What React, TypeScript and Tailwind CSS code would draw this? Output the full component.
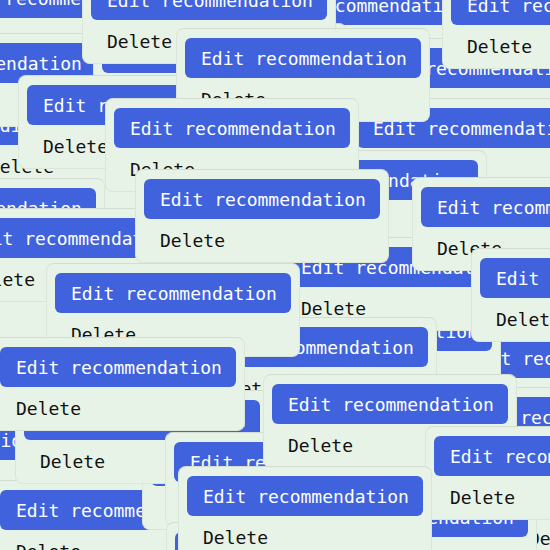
import React from 'react';

// Button top-left corners, in stacking order (first = bottom-most).
const cards: { x: number; y: number }[] = [
  { x: -65, y: -22 },
  { x: 243, y: -15 },
  { x: 355, y: 48 },
  { x: 451, y: -15 },
  { x: -27, y: 105 },
  { x: -140, y: 43 },
  { x: 102, y: 33 },
  { x: 91, y: -20 },
  { x: 27, y: 85 },
  { x: 357, y: 108 },
  { x: 185, y: 38 },
  { x: -140, y: 188 },
  { x: 242, y: 160 },
  { x: 114, y: 108 },
  { x: -46, y: 218 },
  { x: 452, y: 338 },
  { x: 256, y: 311 },
  { x: 285, y: 247 },
  { x: 144, y: 179 },
  { x: 421, y: 187 },
  { x: 480, y: 258 },
  { x: 192, y: 327 },
  { x: 55, y: 273 },
  { x: 450, y: 397 },
  { x: -189, y: 420 },
  { x: 0, y: 490 },
  { x: 151, y: 446 },
  { x: 24, y: 400 },
  { x: 0, y: 347 },
  { x: 174, y: 442 },
  { x: 272, y: 384 },
  { x: 513, y: 477 },
  { x: 292, y: 497 },
  { x: 175, y: 532 },
  { x: 434, y: 436 },
  { x: 187, y: 476 },
];

const RecommendationMenu: React.FC<{ x: number; y: number }> = ({ x, y }) => (
  <div
    className="absolute w-[254px] rounded-lg border border-[#dce5da] border-t-[#d3dcd1] bg-[#e8f3e7] px-2 pt-[9px] pb-[8px]"
    style={{ left: x - 9, top: y - 10 }}
  >
    <button className="flex h-10 w-full items-center whitespace-nowrap rounded-md bg-[#4063dd] px-4 text-left text-[18px] text-white">
      Edit recommendation
    </button>
    <div className="mt-[7px] flex h-7 items-center whitespace-nowrap px-4 text-[18px] text-[#111111]">
      Delete
    </div>
  </div>
);

export default function App() {
  return (
    <div className="relative h-[550px] w-[550px] overflow-hidden bg-[#e8f3e7] font-['DejaVu_Sans_Mono',monospace]">
      {cards.map((c, i) => (
        <RecommendationMenu key={i} x={c.x} y={c.y} />
      ))}
    </div>
  );
}
